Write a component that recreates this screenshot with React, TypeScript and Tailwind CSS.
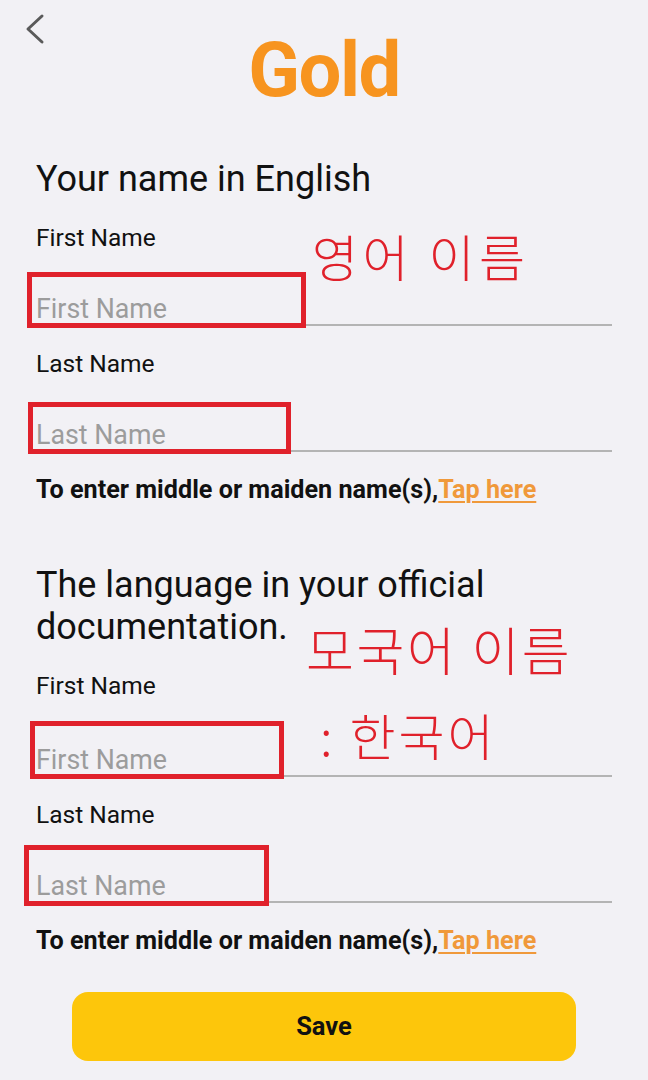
import React from "react";

function Field({
  label,
  placeholder,
  box,
  tall,
}: {
  label: string;
  placeholder: string;
  box: string;
  tall?: boolean;
}) {
  return (
    <div className="flex flex-col">
      <div className="text-[24.5px] leading-[28px] text-[#111]">{label}</div>
      <div
        className={
          "relative border-b-2 border-[#b4b4b4] pb-[1px] flex items-end " + (tall ? "h-[77px]" : "h-[74px]")
        }
      >
        <span className="text-[26.8px] leading-[28px] text-[#9c9c9c]">{placeholder}</span>
        <div className={"absolute border-[5px] border-[#e0212b] " + box} />
      </div>
    </div>
  );
}

function Hint() {
  return (
    <div className="text-[25.2px] leading-[26px] font-bold text-[#111] whitespace-nowrap">
      To enter middle or maiden name(s),
      <span className="text-[#f0993a] underline underline-offset-[3px] decoration-[2px]">Tap here</span>
    </div>
  );
}

const cjk = { fontFamily: "'Noto Sans CJK KR', sans-serif" };

export default function App() {
  return (
    <div
      className="relative w-[648px] h-[1080px] overflow-hidden bg-[#f2f1f5]"
      style={{ fontFamily: "Roboto, 'Noto Sans', sans-serif" }}
    >
      {/* Header */}
      <div className="grid grid-cols-[1fr_auto_1fr] pt-[13px]">
        <div className="pl-[22px]">
          <svg width="26" height="32" viewBox="0 0 26 32" fill="none">
            <path d="M20 3 L6 16 L20 29" stroke="#5a5a5a" strokeWidth="3" strokeLinecap="round" strokeLinejoin="round" />
          </svg>
        </div>
        <div className="mt-[19px] text-[76px] leading-none font-bold text-[#f7941f] tracking-[-1.5px]">Gold</div>
        <div />
      </div>

      <div className="flex flex-col px-[36px]">
        <div className="mt-[50px] text-[36px] leading-[42px] text-[#111]">Your name in English</div>
        <div className="mt-[24px]">
          <Field label="First Name" placeholder="First Name" box="left-[-9px] top-[20px] w-[279px] h-[56px]" />
        </div>
        <div className="mt-[24px]">
          <Field label="Last Name" placeholder="Last Name" box="left-[-8px] top-[24px] w-[263px] h-[52px]" />
        </div>
        <div className="mt-[25px]">
          <Hint />
        </div>

        <div className="mt-[61px] flex flex-col items-start text-[36px] leading-[42px] text-[#111]">
          <div>The language in your official</div>
          <div>documentation.</div>
        </div>
        <div className="mt-[24px]">
          <Field tall label="First Name" placeholder="First Name" box="left-[-6px] top-[21px] w-[254px] h-[58px]" />
        </div>
        <div className="mt-[24px]">
          <Field label="Last Name" placeholder="Last Name" box="left-[-12px] top-[16px] w-[245px] h-[61px]" />
        </div>
        <div className="mt-[25px]">
          <Hint />
        </div>

        <div className="mt-[38px] flex justify-center">
          <button className="w-[504px] h-[69px] rounded-[16px] bg-[#fdc60b] text-[25.5px] font-bold text-[#111]">
            Save
          </button>
        </div>
      </div>

      {/* Red annotations */}
      <div
        className="absolute left-[312px] top-[230px] text-[50px] leading-none font-light tracking-[4.5px] text-[#e0212b]"
        style={cjk}
      >
        영어 이름
      </div>
      <div
        className="absolute left-[306px] top-[623px] text-[52px] leading-none font-light tracking-[2.6px] text-[#e0212b]"
        style={cjk}
      >
        모국어 이름
      </div>
      <div
        className="absolute left-[320px] top-[709px] text-[50px] leading-none font-light tracking-[3px] text-[#e0212b]"
        style={cjk}
      >
        :&nbsp;한국어
      </div>
    </div>
  );
}
